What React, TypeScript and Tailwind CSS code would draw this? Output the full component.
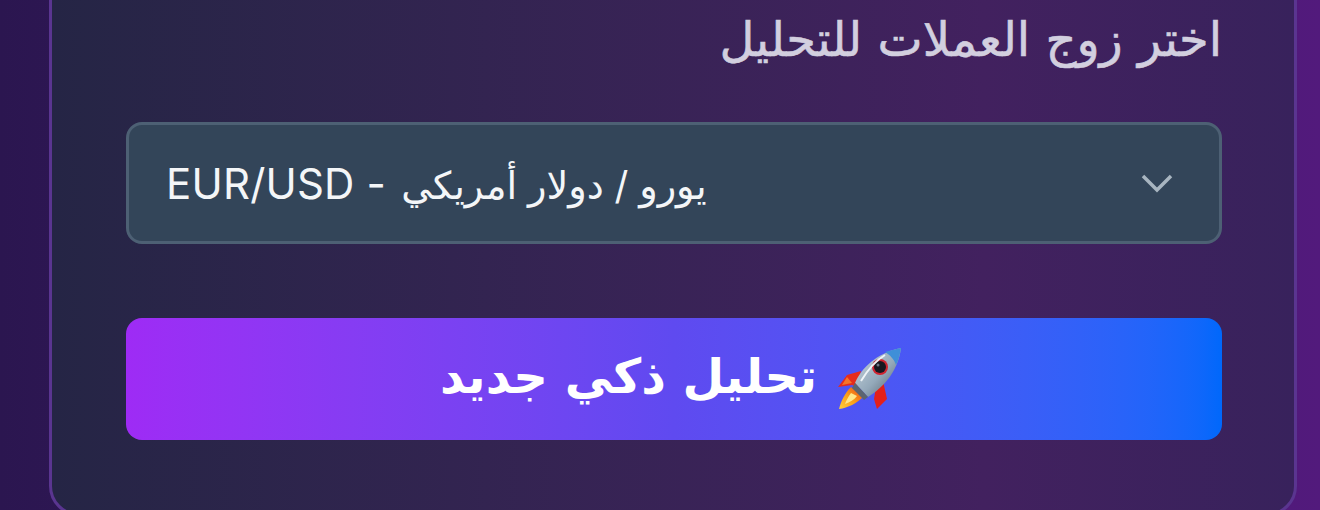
import React from "react";

function Rocket() {
  return (
    <svg width="66" height="64" viewBox="0 0 66 64" className="shrink-0">
      <defs>
        <linearGradient id="rocketBody" x1="0" y1="0" x2="1" y2="1">
          <stop offset="0" stopColor="#cfdce4" />
          <stop offset="0.55" stopColor="#94a9ba" />
          <stop offset="1" stopColor="#4b5661" />
        </linearGradient>
        <linearGradient id="rocketFlame" x1="1" y1="0" x2="0" y2="1">
          <stop offset="0" stopColor="#e8431c" />
          <stop offset="0.5" stopColor="#fb9c16" />
          <stop offset="1" stopColor="#ffd13c" />
        </linearGradient>
      </defs>
      <path d="M24 24 L10 28 L1 40 L15 38 L20 40 Z" fill="#e62c1c" />
      <path d="M10 30 L5 38 L15 36 Z" fill="#f6742a" />
      <path d="M39 40 L37 52 L40 62 L50 52 L46 34 Z" fill="#e3201a" />
      <path d="M14 40 C8 46 4 54 2 62 C11 61 20 56 26 50 Z" fill="url(#rocketFlame)" />
      <path d="M14 46 C11 50 9 54 8 57 C13 55 17 53 20 49 Z" fill="#ffe78a" />
      <path d="M18 36 C24 21 40 6 64 1 C61 24 47 40 31 50 Z" fill="url(#rocketBody)" />
      <path d="M48 5 C54 3 60 2 64 1 C63 7 62 12 59 18 C57 12 53 8 48 5 Z" fill="#3f8fd8" />
      <path d="M18 36 L31 50 L27 53 L15 41 Z" fill="#5b6570" />
      <circle cx="43" cy="20" r="8" fill="#cf2430" />
      <circle cx="43" cy="20" r="6" fill="#17171f" />
      <circle cx="41" cy="18" r="1.5" fill="#6b7380" />
      <path d="M24 34 C30 24 38 14 48 8" stroke="#eef4f7" strokeWidth="2" fill="none" />
    </svg>
  );
}

export default function App() {
  return (
    <div className="h-[510px] w-[1320px] overflow-hidden bg-gradient-to-r from-[#2b1650] to-[#521a7c] pl-[49px] pr-[23px] [font-family:Inter,'Noto_Sans','DejaVu_Sans',sans-serif]">
      <div className="-mt-[40px] mb-[-46px] flex h-[556px] flex-col rounded-[30px] border-[3px] border-[#5a3590] bg-gradient-to-r from-[#252545] via-[#42215f] via-75% to-[#38225c] pl-[74px] pr-[72px] pt-[48px]">
        <div dir="rtl" className="h-[56px] text-[48px] leading-[56px] text-[#d2cfdf] [-webkit-text-stroke:0.6px_#d2cfdf] [font-family:'DejaVu_Sans',sans-serif]">
          اختر زوج العملات للتحليل
        </div>
        <div className="mt-[55px] flex h-[122px] items-center justify-between rounded-[16px] border-[3px] border-[#4d6074] bg-[#334559] pl-[37px] pr-[46px]">
          <span className="text-[38px] text-[#f4f6f8] [font-family:Inter,'DejaVu_Sans',sans-serif]">
            <span className="text-[42px] tracking-[0.2px]">EUR/USD - </span>
            <span className="ml-[3px] text-[38.3px]">يورو / دولار أمريكي</span>
          </span>
          <svg width="32" height="20" viewBox="0 0 32 20" fill="none" stroke="#a8b5c0" strokeWidth="3.5">
            <path d="M2 3 L16 17 L30 3" />
          </svg>
        </div>
        <button className="mt-[74px] flex h-[122px] items-center justify-center gap-[20px] rounded-[16px] bg-gradient-to-r from-[#9e2bf5] via-[#5f4af0] to-[#0068fb] pr-[5px] text-[48px] font-bold text-white [font-family:'DejaVu_Sans',sans-serif]">
          <span dir="rtl" className="pb-[6px]">تحليل ذكي جديد</span>
          <Rocket />
        </button>
      </div>
    </div>
  );
}
